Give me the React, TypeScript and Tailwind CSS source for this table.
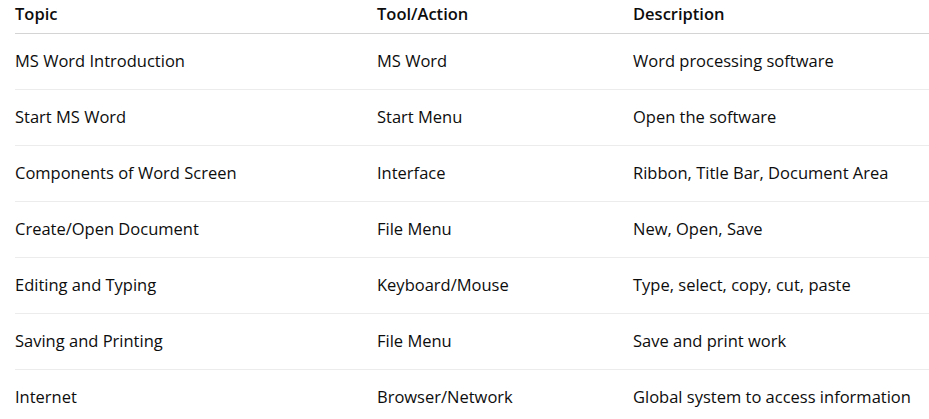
import React from 'react';

const rows = [
  { topic: 'MS Word Introduction', tool: 'MS Word', desc: 'Word processing software' },
  { topic: 'Start MS Word', tool: 'Start Menu', desc: 'Open the software' },
  { topic: 'Components of Word Screen', tool: 'Interface', desc: 'Ribbon, Title Bar, Document Area' },
  { topic: 'Create/Open Document', tool: 'File Menu', desc: 'New, Open, Save' },
  { topic: 'Editing and Typing', tool: 'Keyboard/Mouse', desc: 'Type, select, copy, cut, paste' },
  { topic: 'Saving and Printing', tool: 'File Menu', desc: 'Save and print work' },
  { topic: 'Internet', tool: 'Browser/Network', desc: 'Global system to access information' },
];

export default function App() {
  return (
    <div className="w-[929px] h-[419px] overflow-hidden bg-white pl-[15px] text-[#0d0d0d] font-['Open_Sans',sans-serif] text-[16.5px]">
      <div className="grid grid-cols-[362px_256px_1fr] h-[34px] items-start border-b border-[#d4d4d4] font-semibold">
        <div className="pt-[2px]">Topic</div>
        <div className="pt-[2px]">Tool/Action</div>
        <div className="pt-[2px]">Description</div>
      </div>
      {rows.map((r, i) => (
        <div
          key={`row-${i}`}
          className="grid grid-cols-[362px_256px_1fr] h-[56px] items-center border-b border-[#ececec]"
        >
          <div>{r.topic}</div>
          <div>{r.tool}</div>
          <div>{r.desc}</div>
        </div>
      ))}
    </div>
  );
}
